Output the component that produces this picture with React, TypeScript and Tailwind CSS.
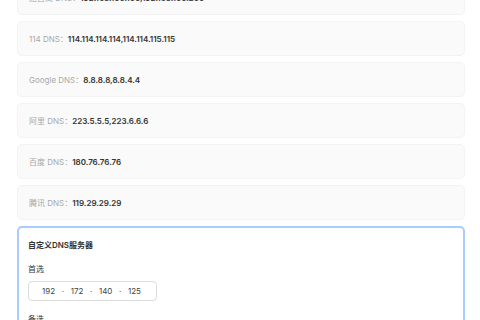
import React from "react";

const rows: [string, string][] = [
  ["运营商 DNS：", "192.168.100.100,192.168.100.200"],
  ["114 DNS：", "114.114.114.114,114.114.115.115"],
  ["Google DNS：", "8.8.8.8,8.8.4.4"],
  ["阿里 DNS：", "223.5.5.5,223.6.6.6"],
  ["百度 DNS：", "180.76.76.76"],
  ["腾讯 DNS：", "119.29.29.29"],
];

export default function App() {
  return (
    <div
      className="w-[480px] h-[320px] overflow-hidden bg-white"
      style={{ fontFamily: '"Inter","Noto Sans CJK SC",sans-serif' }}
    >
      <div className="mt-[-20px] pl-[17px] pr-[15px] flex flex-col gap-[6px]">
        {rows.map(([label, value]) => (
          <div
            key={label}
            className="h-[35px] rounded-[5px] bg-[#fafafa] border border-[#f3f3f3] flex items-center px-[11px] text-[8px]"
          >
            <span className="text-[#a8a8a8]">{label}</span>
            <span className="text-[#333] font-semibold">{value}</span>
          </div>
        ))}
        <div className="rounded-[5px] border-2 border-[#a9cbff] bg-white px-[9px] pt-[11px] pb-[10px] text-[8px]">
          <div className="text-[#333] font-semibold">自定义DNS服务器</div>
          <div className="mt-[12px] text-[#333]">首选</div>
          <div className="mt-[6px] w-[129px] h-[20px] rounded-[4px] border border-[#dcdcdc] flex items-center justify-between pl-[13px] pr-[15px] text-[#444] text-[8px]">
            <span>192</span>
            <span>·</span>
            <span>172</span>
            <span>·</span>
            <span>140</span>
            <span>·</span>
            <span>125</span>
          </div>
          <div className="mt-[12px] text-[#333]">备选</div>
          <div className="mt-[6px] w-[129px] h-[20px] rounded-[4px] border border-[#dcdcdc]" />
        </div>
      </div>
    </div>
  );
}
